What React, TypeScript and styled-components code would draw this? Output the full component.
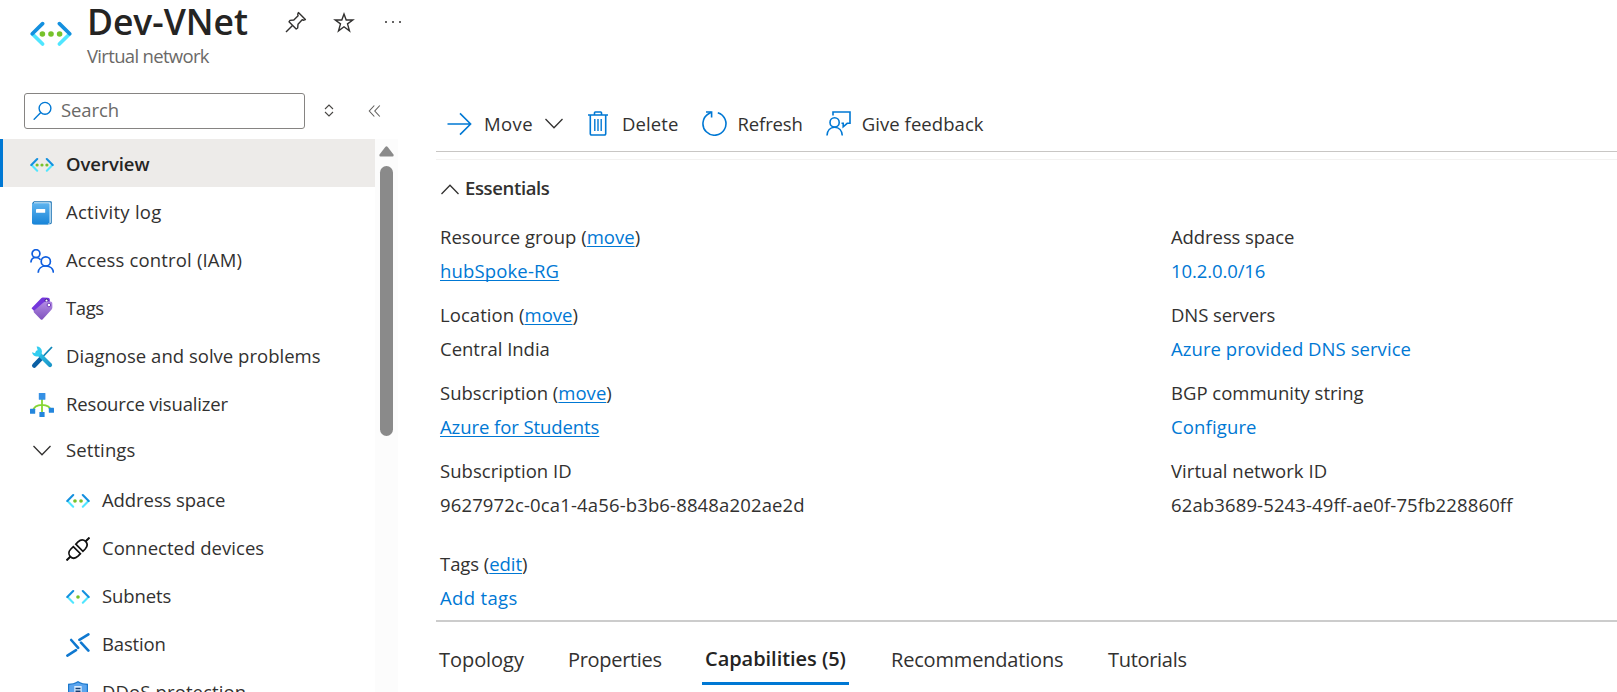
import React from 'react';
import styled, { createGlobalStyle, css } from 'styled-components';

const GlobalStyle = createGlobalStyle`
  * { box-sizing: border-box; }
  html, body { margin: 0; padding: 0; overflow: hidden; }
  body {
    background: #fff;
    color: #323130;
    font-family: "Open Sans", "Noto Sans", sans-serif;
    font-size: 18.5px;
    line-height: 26px;
  }
  svg { display: block; flex: none; }
`;

const Page = styled.div`
  width: 100vw;
  height: 692px;
  display: flex;
  flex-direction: column;
  overflow: hidden;
`;

const Txt = styled.span<{ $ls?: number }>`
  white-space: nowrap;
  letter-spacing: ${(p) => p.$ls ?? 0}px;
`;

/* Header */
const Header = styled.header`
  height: 79px;
  flex: none;
  display: flex;
  padding-left: 30px;
`;

const ResourceIcon = styled.div`
  padding-top: 13px;
  width: 57px;
`;

const TitleBlock = styled.div`
  width: 191px;
`;

const Title = styled.h1`
  margin: 0;
  height: 43px;
  color: #252423;
  font-size: 35.5px;
  font-weight: 600;
  line-height: 42px;
  letter-spacing: -0.05px;
  white-space: nowrap;
`;

const Subtitle = styled.div`
  color: #6b6967;
  font-size: 18.5px;
  letter-spacing: -0.68px;
  white-space: nowrap;
`;

const HeaderActions = styled.div`
  display: flex;
  gap: 26px;
  padding: 11px 0 0 7px;
`;

/* Body */
const Body = styled.div`
  flex: 1;
  min-height: 0;
  display: flex;
`;

const Sidebar = styled.aside`
  width: 398px;
  flex: none;
  display: flex;
  flex-direction: column;
`;

const SearchRow = styled.div`
  height: 60px;
  flex: none;
  padding: 14px 0 0 24px;
  display: flex;
  align-items: flex-start;
`;

const SearchBox = styled.div`
  width: 281px;
  height: 36px;
  border: 1px solid #868482;
  border-radius: 3px;
  display: flex;
  align-items: center;
  gap: 9px;
  padding: 0 8px 2px;
  color: #6b6967;
`;

const SearchTools = styled.div`
  display: flex;
  gap: 34px;
  padding: 10px 0 0 19px;
`;

const NavArea = styled.div`
  flex: 1;
  min-height: 0;
  display: flex;
`;

const NavList = styled.nav`
  width: 375px;
  overflow: hidden;
`;

const NavItem = styled.div<{ $active?: boolean; $nested?: boolean; $group?: boolean }>`
  height: ${(p) => (p.$group ? 44 : 48)}px;
  margin-bottom: ${(p) => (p.$group ? 4 : 0)}px;
  display: flex;
  align-items: center;
  gap: ${(p) => (p.$group ? 15 : 12)}px;
  padding: 2px 0 0 ${(p) => (p.$nested ? 63 : 27)}px;
  border-left: 3px solid transparent;
  ${(p) =>
    p.$active &&
    css`
      background: #edebe9;
      border-left-color: #0078d4;
      color: #252423;
      font-weight: 600;
    `}
  svg { margin-top: 1px; }
`;

const ScrollTrack = styled.div`
  width: 23px;
  background: #fcfcfc;
  display: flex;
  flex-direction: column;
  align-items: center;
  padding: 7px 0 0 0;
`;

const ScrollThumb = styled.div`
  width: 13px;
  height: 270px;
  margin-top: 9px;
  border-radius: 7px;
  background: #8a8a8a;
`;

const Main = styled.main`
  flex: 1;
  min-width: 0;
  margin-left: 38px;
  display: flex;
  flex-direction: column;
`;

const Toolbar = styled.div`
  height: 73px;
  flex: none;
  display: flex;
  align-items: center;
  padding: 17px 0 0 11px;
  border-bottom: 1px solid #c8c6c4;
`;

const Command = styled.div<{ $gap: number; $after: number }>`
  display: flex;
  align-items: center;
  gap: ${(p) => p.$gap}px;
  margin-right: ${(p) => p.$after}px;
`;

const EssentialsHeader = styled.div`
  margin-top: 7px;
  height: 65px;
  flex: none;
  border-top: 1px solid #f3f2f1;
  display: flex;
  align-items: flex-start;
  gap: 6px;
  padding: 15px 0 0 5px;
  color: #323130;
  font-weight: 600;
  svg { margin-top: 9px; }
`;

const Columns = styled.div`
  height: 398px;
  flex: none;
  display: grid;
  grid-template-columns: 731px 1fr;
  padding-left: 4px;
  align-content: start;
  border-bottom: 2px solid #cccccc;
`;

const Field = styled.div<{ $gapBefore?: boolean }>`
  height: 78px;
  margin-top: ${(p) => (p.$gapBefore ? 15 : 0)}px;
  display: flex;
  flex-direction: column;
  gap: 8px;
`;

const Link = styled.a<{ $underline?: boolean; $ls?: number }>`
  align-self: flex-start;
  color: #0078d4;
  white-space: nowrap;
  letter-spacing: ${(p) => p.$ls ?? 0}px;
  text-decoration: ${(p) => (p.$underline ? 'underline' : 'none')};
  text-decoration-thickness: 1px;
  text-underline-offset: 2px;
  text-decoration-skip-ink: none;
`;

const Tabs = styled.div`
  display: flex;
  padding-left: 3px;
  font-size: 20px;
`;

const Tab = styled.div<{ $w: number; $active?: boolean; $ls?: number }>`
  width: ${(p) => p.$w}px;
  height: 63px;
  padding-top: 25px;
  white-space: nowrap;
  letter-spacing: ${(p) => p.$ls ?? 0}px;
  ${(p) =>
    p.$active &&
    css`
      padding: 24px 0 0 3px;
      margin: 0 42px 0 -4px;
      border-bottom: 3px solid #0078d4;
      font-weight: 600;
      color: #252423;
    `}
`;

/* Icons */
const VNetIcon = ({ size, dots }: { size: number; dots: number }) => {
  const xs = dots === 3 ? [12.4, 21, 29.6] : dots === 2 ? [15.7, 26.3] : [21];
  return (
    <svg width={size} height={size} viewBox="0 0 42 42" fill="none">
      <g strokeWidth="3.7" strokeLinecap="round">
        <path d="M2.7 21.2 12.6 31M39.3 21.2 29.4 31" stroke="#50e6ff" />
        <path d="M12.6 10.6 2.3 20.8M29.4 10.6 39.7 20.8" stroke="#1490df" />
      </g>
      {xs.map((x) => (
        <circle key={x} cx={x} cy="21" r={dots === 3 ? 2.8 : 3.2} fill="#76c22b" />
      ))}
    </svg>
  );
};

const PinIcon = () => (
  <svg width="22" height="22" viewBox="0 0 22 22" fill="none" stroke="#323130" strokeWidth="1.4" strokeLinejoin="round">
    <path d="M13.4 1.6 20.4 8.6 18.8 9.2 17.2 8.8 13 13.2 12.7 17 11.2 18 4 10.8 5 9.4 8.8 9 13.1 4.8 12.7 3.2Z" />
    <path d="M7.5 14.5 1 21" />
  </svg>
);

const StarIcon = () => (
  <svg width="22" height="22" viewBox="0 0 22 22" fill="none" stroke="#323130" strokeWidth="1.4">
    <path d="M11 3 13.2 9H19.8L14.5 12.9 16.5 19.9 11 15.8 5.5 19.9 7.5 12.9 2.2 9H8.8Z" />
  </svg>
);

const MoreIcon = () => (
  <svg width="22" height="22" viewBox="0 0 22 22" fill="#323130">
    <circle cx="5" cy="11" r="1" />
    <circle cx="12" cy="11" r="1" />
    <circle cx="19" cy="11" r="1" />
  </svg>
);

const SearchIcon = () => (
  <svg width="19" height="19" viewBox="0 0 19 19" fill="none" stroke="#0078d4" strokeWidth="1.4">
    <circle cx="12" cy="7.3" r="5.9" />
    <path d="M7.8 11.5 .7 18.7" />
  </svg>
);

const SortIcon = () => (
  <svg width="10" height="15" viewBox="0 0 10 15" fill="none" stroke="#484644" strokeWidth="1.1">
    <path d="M1 6 5 2 9 6M1 9 5 13 9 9" />
  </svg>
);

const CollapseIcon = () => (
  <svg width="13" height="15" viewBox="0 0 13 15" fill="none" stroke="#605e5c" strokeWidth="1.1">
    <path d="M6.300 2.500 1.300 8 6.300 13.500M11.800 2.500 6.800 8 11.800 13.500" />
  </svg>
);

const BookIcon = () => (
  <svg width="24" height="24" viewBox="0 0 24 24">
    <defs>
      <linearGradient id="book" x1="0" y1="0" x2="0" y2="1">
        <stop offset="0" stopColor="#5eb3ee" />
        <stop offset="1" stopColor="#1784d8" />
      </linearGradient>
    </defs>
    <path d="M4 .3H20.8A1 1 0 0 1 21.8 1.3V21.6A1.6 1.6 0 0 1 20.2 23.3H4.5L2 21V2.2Z" fill="#1c74b4" />
    <path d="M4 1.2H20.2L20.8 2V21.5L20 22.4H4Z" fill="#d5ecfb" />
    <path d="M2 2.3H18.3A1.2 1.2 0 0 1 19.5 3.5V22H18A1 1 0 0 0 19 23.4H3.6A1.6 1.6 0 0 1 2 21.8Z" fill="url(#book)" />
    <rect x="6" y="8" width="9.2" height="3.8" rx=".4" fill="#fff" />
  </svg>
);

const PeopleIcon = () => (
  <svg width="24" height="24" viewBox="0 0 24 24" fill="none" stroke="#0f5fe0" strokeWidth="1.7">
    <circle cx="6" cy="4.6" r="3.9" />
    <path d="M.9 13.6C1 10.2 3.2 8.5 6 8.5 8 8.5 9.6 9.3 10.5 10.8" />
    <circle cx="15.8" cy="12.4" r="4.6" />
    <path d="M8.2 23.8C8.4 19.6 11.5 17 15.8 17S23.2 19.6 23.5 23.8" />
  </svg>
);

const TagIcon = () => (
  <svg width="24" height="24" viewBox="0 0 24 24">
    <defs>
      <linearGradient id="tag" x1="0" y1="0" x2="0" y2="1">
        <stop offset="0" stopColor="#b38be4" />
        <stop offset="1" stopColor="#7f52bd" />
      </linearGradient>
    </defs>
    <path d="M1.500 11.200 11.200 1.200Q12 .4 13 .5L18 .8Q19.700 1 19.800 2.500L20 7 4.500 14.500Z" fill="#7436dc" />
    <circle cx="16.500" cy="3.600" r="1.500" fill="#fff" stroke="#381b7a" strokeWidth="1" />
    <path d="M4 13.800 13.500 5.600Q14.600 4.700 16 4.600L20.600 4.500Q22.200 4.500 22.300 6L22.400 10.200Q22.400 11.600 21.400 12.800L12.500 22.400Q11.700 23.300 10.800 22.400L4 15.600Q3.200 14.700 4 13.800Z" fill="url(#tag)" />
    <circle cx="18.900" cy="8" r="1.800" fill="#fff" stroke="#7341ba" strokeWidth="1" />
  </svg>
);

const ToolsIcon = () => (
  <svg width="24" height="24" viewBox="0 0 24 24" fill="none">
    <defs>
      <linearGradient id="tool" x1="5" y1="5" x2="22" y2="22" gradientUnits="userSpaceOnUse">
        <stop offset="0" stopColor="#32cdf0" />
        <stop offset="1" stopColor="#1690c4" />
      </linearGradient>
    </defs>
    <path d="M22 2 13 11.500" stroke="#0f86b8" strokeWidth="1.800" />
    <path d="M11 13.500 4.300 20.500" stroke="#0a5fa4" strokeWidth="4.600" strokeLinecap="round" />
    <path d="M7.500 7.500 20 20" stroke="url(#tool)" strokeWidth="4.200" strokeLinecap="round" />
    <path d="M6.600 1.600A5 5 0 1 1 2 7.200L5.200 8.200 7.800 5.600Z" fill="#32cdf0" />
  </svg>
);

const VisualizerIcon = () => (
  <svg width="24" height="24" viewBox="0 0 24 24">
    <path d="M12 6V19M2.500 18.500C3.500 14.500 7 11.800 12 11.800S20.500 14.500 21.500 18.500" fill="none" stroke="#86d633" strokeWidth="1.800" />
    <g fill="#2486dd">
      <rect x="8.800" y="0" width="6.600" height="6.800" rx=".6" fill="#3590e4" />
      <rect x="0" y="15.800" width="5.200" height="5" rx=".5" />
      <rect x="18.800" y="14.800" width="5.200" height="5" rx=".5" />
      <rect x="9.400" y="19" width="5.200" height="5" rx=".5" />
    </g>
  </svg>
);

const ChevronIcon = ({ up, left = 0 }: { up?: boolean; left?: number }) => (
  <svg width={18 + left} height="11" viewBox={`${-left} 0 ${18 + left} 11`} fill="none" stroke="#323130" strokeWidth="1.3">
    <path d={up ? 'M.5 10 9 1.3 17.5 10' : 'M.5 1 9 9.7 17.5 1'} />
  </svg>
);

const PlugIcon = () => (
  <svg width="24" height="24" viewBox="0 0 24 24" fill="none" stroke="#111" strokeWidth="1.7">
    <path d="M.5 23.5 4.5 19.5M19.5 4.5 23.5.5" strokeWidth="2" />
    <path d="M7.3 9.6 14.4 16.7 12 19.2C9.5 21.5 6.5 21.8 4.4 19.6 2.3 17.5 2.5 14.4 4.9 12Z" />
    <path d="M9.8 7.2 16.9 14.3 19.2 12C21.5 9.5 21.7 6.6 19.6 4.4 17.5 2.3 14.5 2.5 12 4.9Z" />
  </svg>
);

const BastionIcon = () => (
  <svg width="24" height="24" viewBox="0 0 24 24" fill="none" stroke="#0f78d0" strokeWidth="2.6" strokeLinecap="round">
    <path d="M5.200 7 12.200 14.800" />
    <path d="M1.400 22.600 10 17.200" />
    <path d="M22.400 1.400 13.400 6.800" />
    <path d="M15 9.600 22.400 17.600" />
  </svg>
);

const ShieldIcon = () => (
  <svg width="24" height="24" viewBox="0 0 24 24">
    <path d="M12 0C15 2.2 18.5 2.6 22 2.8V12C22 18 17 21.5 12 24 7 21.5 2 18 2 12V2.8C5.5 2.6 9 2.2 12 0Z" fill="#1b78cc" />
    <path d="M12 1.6C15 3.2 18 3.7 20.8 3.9V12C20.8 17 16.5 20.3 12 22.6 7.5 20.3 3.2 17 3.2 12V3.9C6 3.7 9 3.2 12 1.6Z" fill="#5ca5ee" />
    <rect x="8.3" y="5" width="7.4" height="13" fill="#d9ecff" />
    <path d="M9.5 7.4H14.5M9.5 10.2H14.5" stroke="#173f73" strokeWidth="1.5" />
  </svg>
);

const MoveIcon = () => (
  <svg width="25" height="24" viewBox="0 0 25 24" fill="none" stroke="#0078d4" strokeWidth="1.6">
    <path d="M.5 12H23.5M13 1.4 23.6 12 13 22.6" />
  </svg>
);

const TrashIcon = () => (
  <svg width="20" height="25" viewBox="0 0 20 25" fill="none" stroke="#0078d4" strokeWidth="1.6">
    <path d="M0 4H20M6.5 4V1.8A.8.8 0 0 1 7.3 1H12.7A.8.8 0 0 1 13.5 1.8V4" />
    <path d="M2.3 4V22.8A1.2 1.2 0 0 0 3.5 24H16.5A1.2 1.2 0 0 0 17.7 22.8V4" />
    <path d="M6.8 8V20M10 8V20M13.2 8V20" strokeWidth="1.4" />
  </svg>
);

const RefreshIcon = () => (
  <svg width="25" height="25" viewBox="0 0 25 25" fill="none" stroke="#0078d4" strokeWidth="1.6">
    <path d="M15.8 1.7A11.5 11.5 0 1 1 6.6 2.8L9.3 1.2" />
    <path d="M4 1H9.6V6.5" />
  </svg>
);

const FeedbackIcon = () => (
  <svg width="25" height="25" viewBox="0 0 25 25" fill="none" stroke="#0078d4" strokeWidth="1.6">
    <path d="M7 4.5V1H24V12.3H21.2L17.2 15.8V12.3H15.5" />
    <circle cx="8.6" cy="11.4" r="4.6" />
    <path d="M1 24.5C1.2 19.5 4.2 16.2 8.600 16.200S16 19.500 16.300 24.500" />
  </svg>
);

const nav = [
  { label: 'Overview', ls: -0.05, icon: <VNetIcon size={24} dots={3} />, active: true },
  { label: 'Activity log', ls: 0.28, icon: <BookIcon /> },
  { label: 'Access control (IAM)', ls: 0.17, icon: <PeopleIcon /> },
  { label: 'Tags', ls: -0.4, icon: <TagIcon /> },
  { label: 'Diagnose and solve problems', ls: 0.02, icon: <ToolsIcon /> },
  { label: 'Resource visualizer', ls: -0.16, icon: <VisualizerIcon /> },
  { label: 'Settings', ls: 0.1, icon: <ChevronIcon left={3} />, group: true },
  { label: 'Address space', ls: -0.08, icon: <VNetIcon size={24} dots={2} />, nested: true },
  { label: 'Connected devices', ls: 0.04, icon: <PlugIcon />, nested: true },
  { label: 'Subnets', ls: -0.1, icon: <VNetIcon size={24} dots={1} />, nested: true },
  { label: 'Bastion', ls: -0.15, icon: <BastionIcon />, nested: true },
  { label: 'DDoS protection', ls: 0.12, icon: <ShieldIcon />, nested: true },
];

type FieldData = {
  label: string;
  ls: number;
  action?: string;
  value: string;
  valueLs: number;
  link?: boolean;
  underline?: boolean;
  gapBefore?: boolean;
};

const left: FieldData[] = [
  { label: 'Resource group', ls: 0.02, action: 'move', value: 'hubSpoke-RG', valueLs: 0.15, link: true, underline: true },
  { label: 'Location', ls: 0.05, action: 'move', value: 'Central India', valueLs: -0.02 },
  { label: 'Subscription', ls: 0.02, action: 'move', value: 'Azure for Students', valueLs: -0.08, link: true, underline: true },
  { label: 'Subscription ID', ls: 0.04, value: '9627972c-0ca1-4a56-b3b6-8848a202ae2d', valueLs: 0.14 },
  { label: 'Tags', ls: -0.06, action: 'edit', value: 'Add tags', valueLs: 0.34, link: true, gapBefore: true },
];

const right: FieldData[] = [
  { label: 'Address space', ls: -0.08, value: '10.2.0.0/16', valueLs: -0.1, link: true },
  { label: 'DNS servers', ls: -0.08, value: 'Azure provided DNS service', valueLs: 0.06, link: true },
  { label: 'BGP community string', ls: 0, value: 'Configure', valueLs: 0.14, link: true },
  { label: 'Virtual network ID', ls: 0.04, value: '62ab3689-5243-49ff-ae0f-75fb228860ff', valueLs: 0.13 },
];

const FieldList = ({ items }: { items: FieldData[] }) => (
  <div>
    {items.map((f) => (
      <Field key={f.label} $gapBefore={f.gapBefore}>
        <Txt $ls={f.ls}>
          {f.label}
          {f.action && (
            <>
              {' ('}
              <Link $underline $ls={f.ls}>{f.action}</Link>)
            </>
          )}
        </Txt>
        {f.link ? (
          <Link $underline={f.underline} $ls={f.valueLs}>{f.value}</Link>
        ) : (
          <Txt $ls={f.valueLs}>{f.value}</Txt>
        )}
      </Field>
    ))}
  </div>
);

export default function App() {
  return (
    <>
      <GlobalStyle />
      <Page>
        <Header>
          <ResourceIcon>
            <VNetIcon size={42} dots={3} />
          </ResourceIcon>
          <TitleBlock>
            <Title>Dev-VNet</Title>
            <Subtitle>Virtual network</Subtitle>
          </TitleBlock>
          <HeaderActions>
            <PinIcon />
            <StarIcon />
            <MoreIcon />
          </HeaderActions>
        </Header>
        <Body>
          <Sidebar>
            <SearchRow>
              <SearchBox>
                <SearchIcon />
                <Txt $ls={-0.1}>Search</Txt>
              </SearchBox>
              <SearchTools>
                <SortIcon />
                <CollapseIcon />
              </SearchTools>
            </SearchRow>
            <NavArea>
              <NavList>
                {nav.map((n) => (
                  <NavItem key={n.label} $active={n.active} $nested={n.nested} $group={n.group}>
                    {n.icon}
                    <Txt $ls={n.ls}>{n.label}</Txt>
                  </NavItem>
                ))}
              </NavList>
              <ScrollTrack>
                <svg width="15" height="11" viewBox="0 0 15 11">
                  <path d="M6.3 1Q7.5-.3 8.7 1L14.5 8.5Q15 10.5 13.5 10.5H1.5Q0 10.5.5 8.5Z" fill="#8a8a8a" />
                </svg>
                <ScrollThumb />
              </ScrollTrack>
            </NavArea>
          </Sidebar>
          <Main>
            <Toolbar>
              <Command $gap={12} $after={25}>
                <MoveIcon />
                <Txt $ls={0.4}>Move</Txt>
                <ChevronIcon />
              </Command>
              <Command $gap={14} $after={23}>
                <TrashIcon />
                <Txt $ls={0.11}>Delete</Txt>
              </Command>
              <Command $gap={11} $after={23}>
                <RefreshIcon />
                <Txt $ls={-0.13}>Refresh</Txt>
              </Command>
              <Command $gap={11} $after={0}>
                <FeedbackIcon />
                <Txt $ls={0.06}>Give feedback</Txt>
              </Command>
            </Toolbar>
            <EssentialsHeader>
              <ChevronIcon up />
              <Txt $ls={-0.36}>Essentials</Txt>
            </EssentialsHeader>
            <Columns>
              <FieldList items={left} />
              <FieldList items={right} />
            </Columns>
            <Tabs>
              <Tab $w={129} $ls={-0.05}>Topology</Tab>
              <Tab $w={138} $ls={-0.31}>Properties</Tab>
              <Tab $w={147} $ls={-0.04} $active>Capabilities (5)</Tab>
              <Tab $w={217} $ls={-0.18}>Recommendations</Tab>
              <Tab $w={100} $ls={-0.3}>Tutorials</Tab>
            </Tabs>
          </Main>
        </Body>
      </Page>
    </>
  );
}
